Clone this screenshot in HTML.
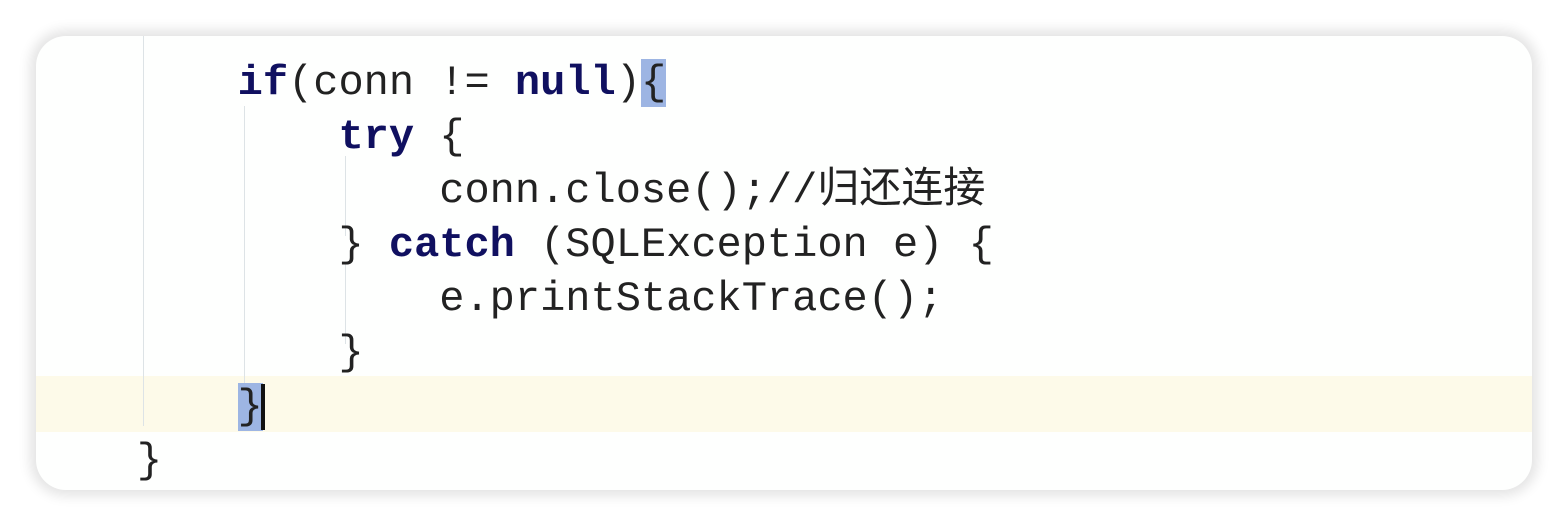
<!DOCTYPE html>
<html><head><meta charset="utf-8"><style>
html,body{margin:0;padding:0;width:1568px;height:526px;background:#fff;overflow:hidden}
.card{position:absolute;left:36px;top:36px;width:1496px;height:454px;background:#fefffe;border-radius:30px;box-shadow:0 0 12px 6px #e4e4e4;overflow:hidden}
.hl{position:absolute;left:0;top:340px;width:1496px;height:56px;background:#fdfae9}
.g{position:absolute;width:1px;background:#dde3e6}
.code{position:absolute;left:0;top:20px;font-family:"Liberation Mono","Noto Sans CJK SC",monospace;font-size:42px;line-height:54px;color:#222;white-space:pre}
.l{height:54px}
b{color:#101060}
.br{background:#9db5e3}
.cur{display:inline-block;width:4px;height:46px;background:#111;vertical-align:middle;margin-left:-2px}
</style></head><body>
<div class="card">
<div class="hl"></div>
<div class="g" style="left:107px;top:0;height:390px"></div>
<div class="g" style="left:208px;top:70px;height:320px"></div>
<div class="g" style="left:309px;top:120px;height:80px"></div>
<div class="g" style="left:309px;top:228px;height:80px"></div>
<div class="code"><div class="l">        <b>if</b>(conn != <b>null</b>)<span class="br">{</span></div><div class="l">            <b>try</b> {</div><div class="l">                conn.close();//归还连接</div><div class="l">            } <b>catch</b> (SQLException e) {</div><div class="l">                e.printStackTrace();</div><div class="l">            }</div><div class="l">        <span class="br">}</span><span class="cur"></span></div><div class="l">    }</div></div>
</div>
</body></html>
